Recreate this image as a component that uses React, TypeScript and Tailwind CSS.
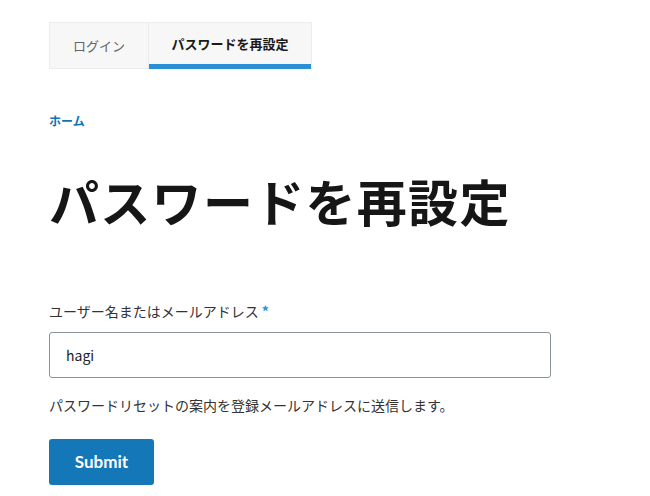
import React from 'react';

const font = "font-['Noto_Sans_CJK_JP','Noto_Sans',sans-serif]";

const Tabs: React.FC = () => (
  <div className="flex w-[263px] h-[47px] border border-[#ececec] bg-[#f7f7f7]">
    <a className="flex w-[99px] items-center justify-center border-r border-[#ececec] text-[13px] text-[#666]">
      ログイン
    </a>
    <a className="relative flex flex-1 items-center justify-center pb-[4px] text-[13px] font-bold text-[#1a1a1a]">
      パスワードを再設定
      <span className="absolute bottom-[-1px] left-0 right-0 h-[5px] bg-[#2b8fd6]" />
    </a>
  </div>
);

const App: React.FC = () => {
  return (
    <div className={`min-h-[496px] w-[650px] bg-white pl-[49px] pt-[22px] ${font}`}>
      <Tabs />
      <nav className="mt-[38px]">
        <a className="text-[12px] font-bold text-[#0f72b5]">ホーム</a>
      </nav>
      <h1 className="mt-[37px] text-[50px] font-bold leading-[64px] tracking-[1.3px] text-[#161616]">
        パスワードを再設定
      </h1>
      <form className="mt-[69px]">
        <label className="block text-[14px] leading-[20px] text-[#333]">
          ユーザー名またはメールアドレス <span className="font-bold text-[#2b8fd6]">*</span>
        </label>
        <input
          defaultValue="hagi"
          className="mt-[11px] block h-[46px] w-[502px] rounded-[3px] border border-[#8a9499] bg-white px-[16px] text-[14px] text-[#222] outline-none"
        />
        <p className="mt-[17px] text-[14px] leading-[20px] text-[#333]">
          パスワードリセットの案内を登録メールアドレスに送信します。
        </p>
        <button
          type="button"
          className="mt-[24px] h-[46px] w-[105px] rounded-[3px] bg-[#1477b8] font-['Lato',sans-serif] text-[17px] font-bold text-white"
        >
          Submit
        </button>
      </form>
    </div>
  );
};

export default App;
